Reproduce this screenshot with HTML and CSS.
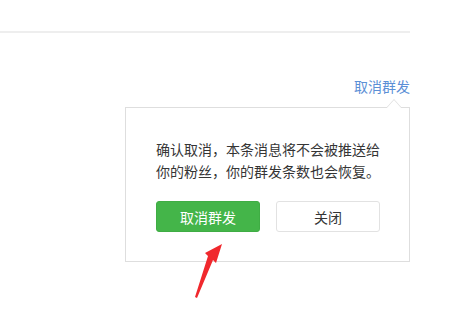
FILE: index.html
```html
<!DOCTYPE html>
<html lang="zh-CN">
<head>
    <meta charset="UTF-8">
    <title>取消群发</title>
    <link rel="stylesheet" href="styles.css">
</head>
<body>
    <div class="page">
        <div class="divider"></div>
        <div class="actions">
            <a class="cancel-link" href="#">取消群发</a>
            <div class="popover">
                <p class="popover-text">确认取消，本条消息将不会被推送给你的粉丝，你的群发条数也会恢复。</p>
                <div class="popover-buttons">
                    <button class="btn btn-primary">取消群发</button>
                    <button class="btn btn-default">关闭</button>
                </div>
            </div>
        </div>
        <!-- annotation arrow drawn over the screenshot -->
        <svg class="pointer" width="40" height="60" viewBox="0 0 40 60">
            <polygon points="29,2 23,21 20,18 4,56 2,55 15,14 12,11" fill="#f0282d"/>
        </svg>
    </div>
</body>
</html>
```

FILE: styles.css
```css
body {
    margin: 0;
    background-color: #fff;
    font-family: "Microsoft YaHei", "Noto Sans CJK SC", sans-serif;
    color: #353535;
}
.page {
    position: relative;
    width: 410px;
    height: 326px;
    padding-top: 31px;
    box-sizing: border-box;
}
.divider {
    height: 2px;
    background-color: #eeeeee;
}
.actions {
    display: flex;
    flex-direction: column;
    align-items: flex-end;
    margin-top: 43px;
}
.cancel-link {
    font-size: 14px;
    line-height: 20px;
    color: #5b8fd6;
    text-decoration: none;
}
.popover {
    position: relative;
    width: 285px;
    height: 155px;
    margin-top: 11px;
    box-sizing: border-box;
    border: 1px solid #dedede;
    background-color: #fff;
    padding: 30px 20px 0 30px;
}
.popover::before,
.popover::after {
    content: "";
    position: absolute;
    right: 7px;
    border-style: solid;
    border-color: transparent;
}
.popover::before {
    top: -9px;
    border-width: 0 8px 9px 8px;
    border-bottom-color: #dedede;
}
.popover::after {
    top: -8px;
    border-width: 0 8px 9px 8px;
    border-bottom-color: #fff;
}
.popover-text {
    margin: 0;
    font-size: 14px;
    line-height: 22px;
}
.popover-buttons {
    display: flex;
    gap: 16px;
    margin-top: 19px;
}
.btn {
    width: 104px;
    height: 31px;
    box-sizing: border-box;
    border-radius: 3px;
    font-family: inherit;
    font-size: 14px;
    cursor: pointer;
}
.btn-primary {
    background-color: #44b549;
    border: 1px solid #3fad44;
    color: #fff;
}
.btn-default {
    background-color: #fff;
    border: 1px solid #e2e2e2;
    color: #353535;
}
.pointer {
    position: absolute;
    left: 193px;
    top: 242px;
}
```
